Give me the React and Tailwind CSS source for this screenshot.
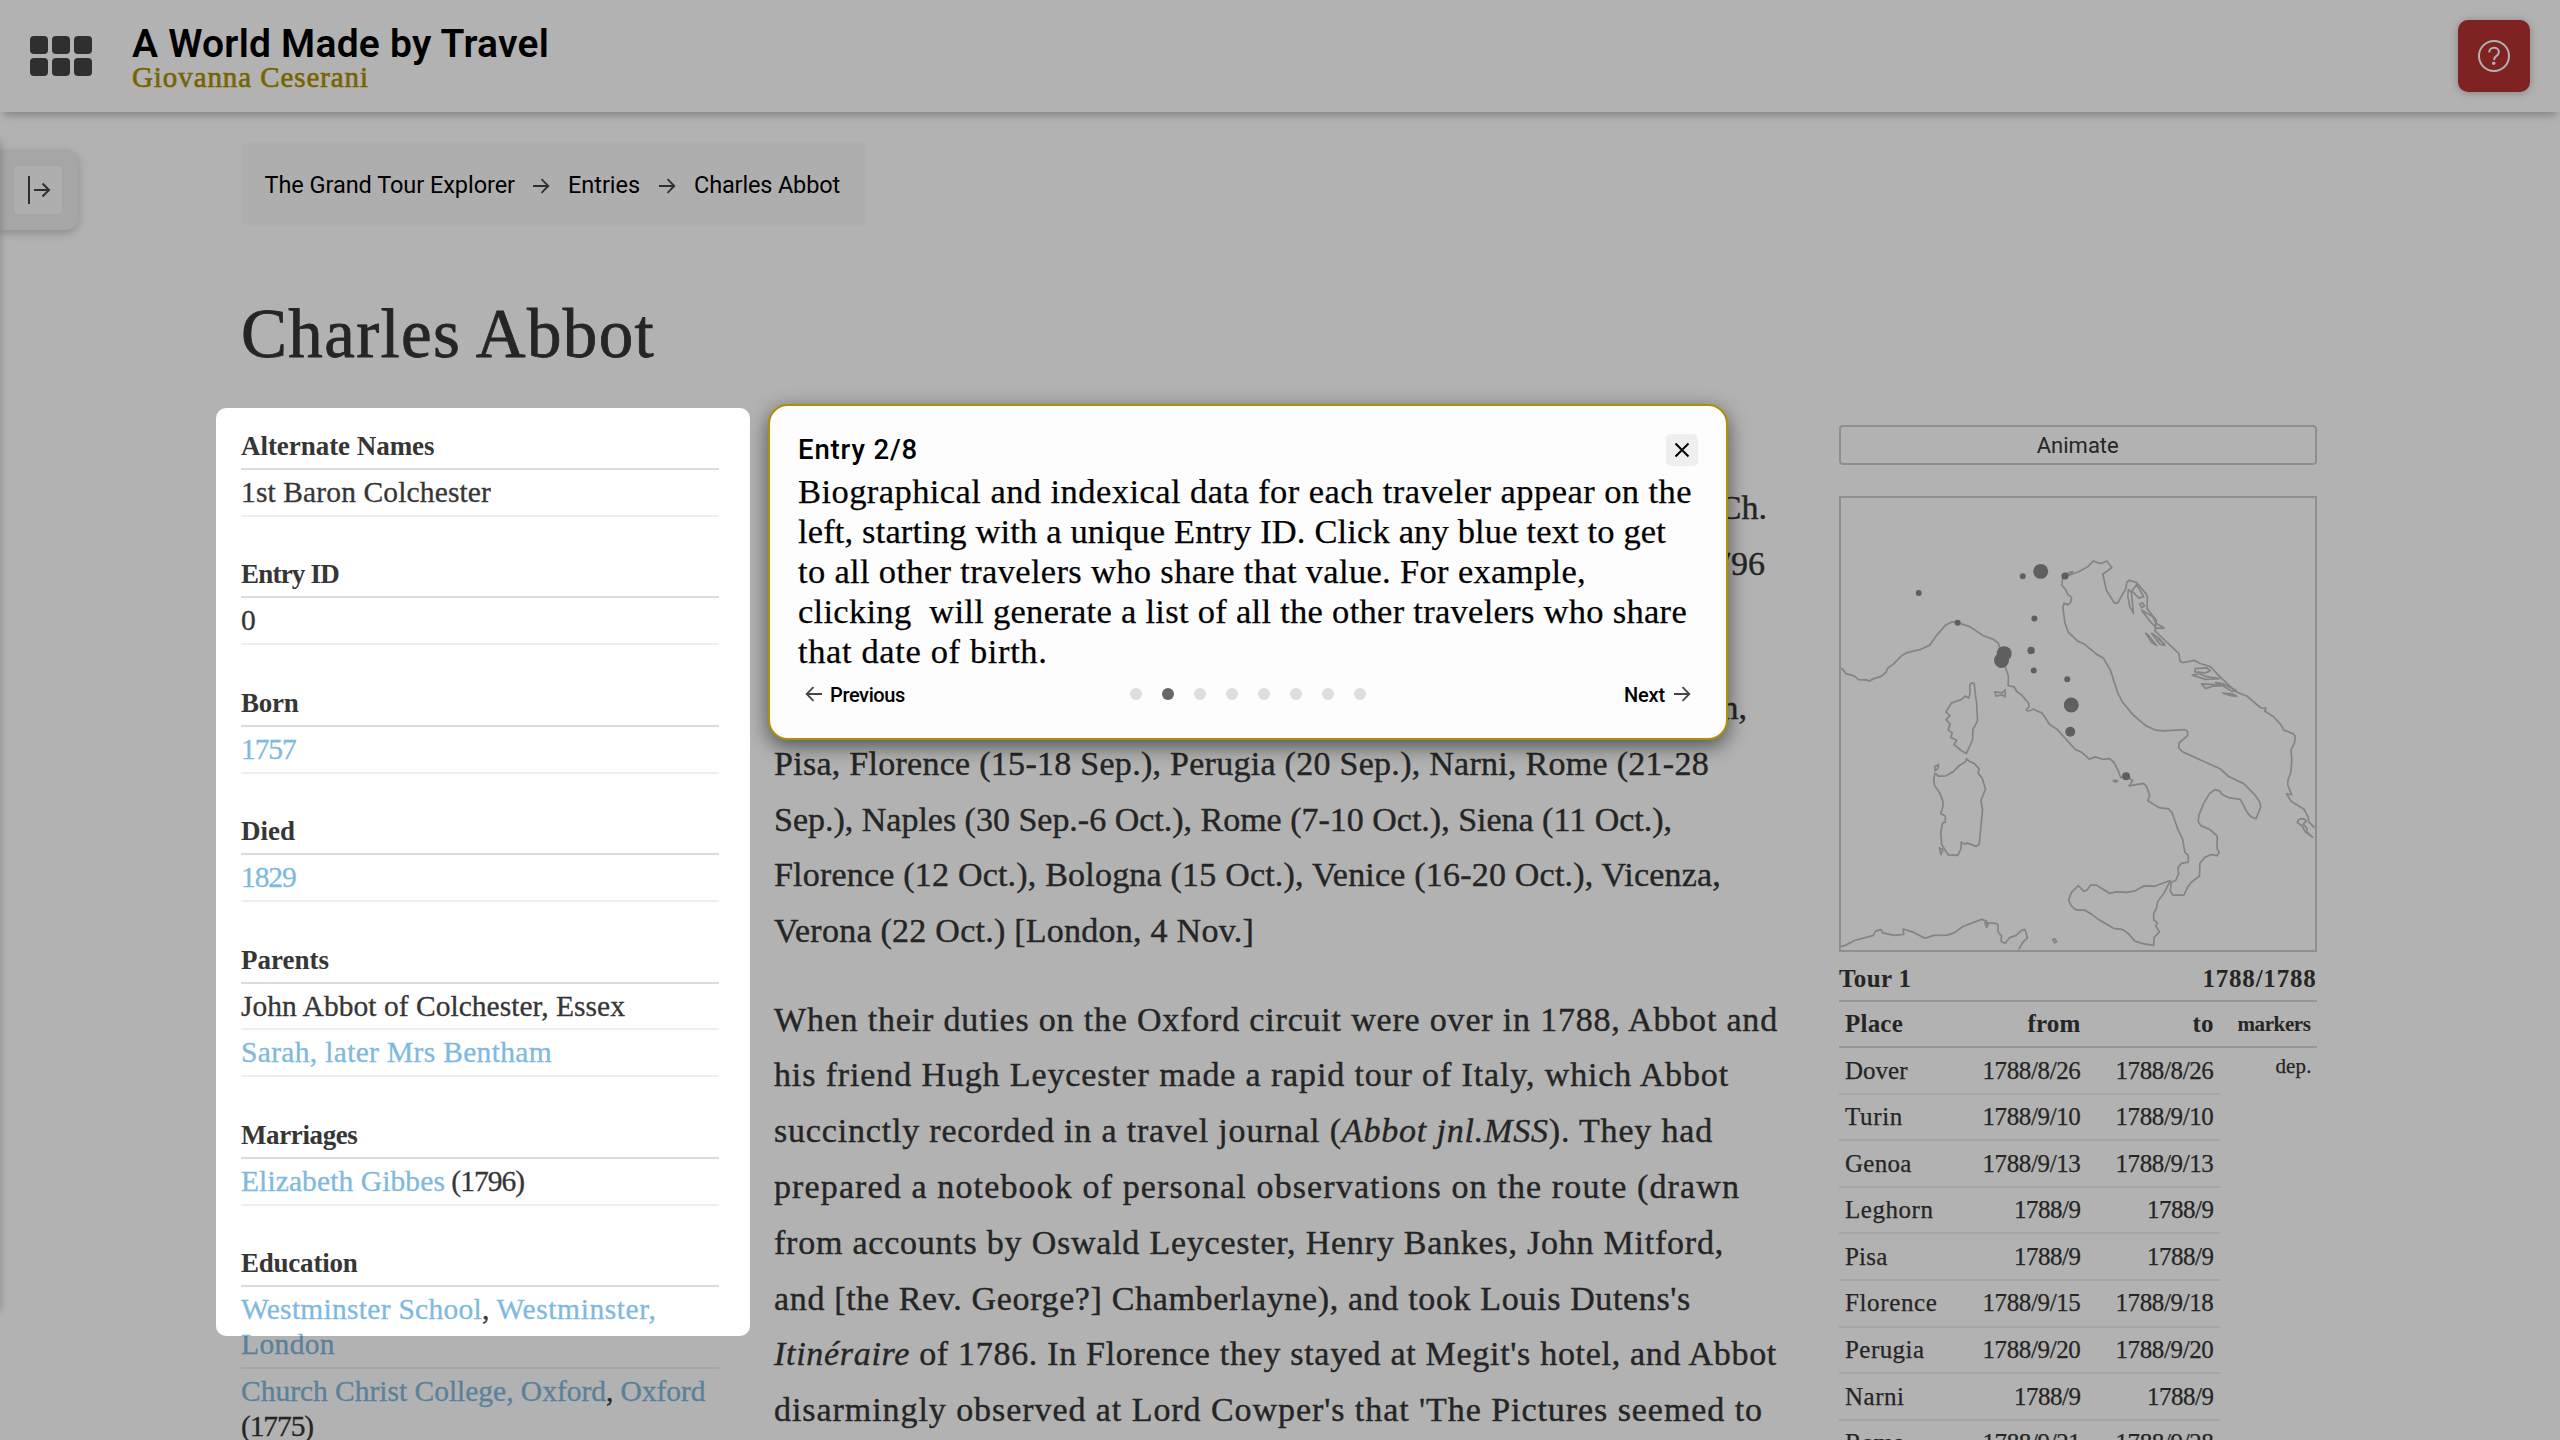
import React, { useLayoutEffect, useRef, useState } from "react";

/* Text run whose letter spacing is adjusted so that it fills a given measure. */
function Run({ w, className = "", children }) {
  const ref = useRef(null);
  const [spacing, setSpacing] = useState(null);
  useLayoutEffect(() => {
    if (!w || !ref.current) return;
    const el = ref.current;
    const n = el.textContent.length;
    setSpacing((w - el.getBoundingClientRect().width) / n);
  }, [w]);
  return (
    <span
      ref={ref}
      className={"inline-block whitespace-pre " + className}
      style={spacing === null ? undefined : { letterSpacing: spacing + "px" }}
    >
      {children}
    </span>
  );
}

function Arrow({ className = "", flip = false }) {
  return (
    <svg viewBox="0 0 18 18" fill="none" stroke="currentColor" strokeWidth="1.8" className={className}>
      {flip ? <path d="M17 9H2M8.5 2.2L1.7 9l6.8 6.800" /> : <path d="M1 9h15M9.500 2.200L16.300 9l-6.800 6.800" />}
    </svg>
  );
}

function Header() {
  return (
    <header className="relative z-10 flex h-[112px] w-full shrink-0 items-start bg-white shadow-[0_7px_8px_-4px_rgba(0,0,0,0.28)]">
      <div className="mt-9 ml-[30px] grid grid-cols-3 gap-1">
        {[0, 1, 2, 3, 4, 5].map((i) => (
          <span key={i} className="h-[18px] w-[18px] rounded-[4px] bg-[#444]" />
        ))}
      </div>
      <div className="ml-[40px] flex flex-col items-start pt-[25px]">
        <div className="h-[38px] font-['Roboto',sans-serif] text-[39px] leading-[38px] font-semibold text-black">
          <Run w={417}>A World Made by Travel</Run>
        </div>
        <div className="h-[26px] pt-px font-['Liberation_Serif',serif] text-[29px] leading-[26px] text-[#ad8f00] [-webkit-text-stroke:0.6px_#ad8f00]">
          <Run w={237}>Giovanna Ceserani</Run>
        </div>
      </div>
      <button className="mt-5 mr-[30px] ml-auto flex h-[72px] w-[72px] items-center justify-center rounded-[10px] bg-[#b53131] shadow-[0_1px_8px_rgba(0,0,0,0.25)]">
        <svg viewBox="0 0 32 32" className="h-8 w-8" fill="none" stroke="#fff">
          <circle cx="16" cy="16" r="15" strokeWidth="2" />
          <path d="M11.2 12.4c0-2.700 2-4.600 4.800-4.600s4.900 1.700 4.900 4.200c0 2-1.100 3-2.700 4.100-1.600 1-2 1.700-2 3.300v.5" strokeWidth="2" />
          <circle cx="15.700" cy="23.200" r="1.700" fill="#fff" stroke="none" />
        </svg>
      </button>
    </header>
  );
}

function DrawerTab() {
  return (
    <div className="flex w-[241px] shrink-0 pt-[38px]">
      <div className="flex h-20 w-[78px] items-center rounded-r-[12px] bg-[#eee] pl-[14px] shadow-[0_3px_10px_rgba(0,0,0,0.22)]">
        <button className="flex h-12 w-12 items-center justify-center rounded-[4px] bg-[#fafafa]">
          <svg viewBox="0 0 48 48" className="h-12 w-12" fill="none" stroke="#444" strokeWidth="2">
            <path d="M15 10v28M20 24h15M28.500 17.500L35 24l-6.500 6.500" />
          </svg>
        </button>
      </div>
    </div>
  );
}

function Breadcrumb() {
  return (
    <nav className="flex h-[84px] w-[625px] items-center rounded-[8px] bg-[#fafafa] pt-[3px] pl-[23.5px] font-['Roboto',sans-serif] text-[23.5px] leading-[81px] text-black">
      <Run w={250.500}>The Grand Tour Explorer</Run>
      <Arrow className="ml-[17px] h-[18px] w-[18px] text-[#444]" />
      <Run w={72} className="ml-[18px]">Entries</Run>
      <Arrow className="ml-[18px] h-[18px] w-[18px] text-[#444]" />
      <Run w={146} className="ml-[18px]">Charles Abbot</Run>
    </nav>
  );
}

const FACTS = [
  { label: ["Alternate Names", 193.500], rows: [[[["1st Baron Colchester", 250]]]] },
  { label: ["Entry ID", 98], rows: [[[["0", 14]]]] },
  { label: ["Born", 57.500], rows: [[[["1757", 54.500, 1]]]] },
  { label: ["Died", 54], rows: [[[["1829", 54.500, 1]]]] },
  {
    label: ["Parents", 88],
    rows: [[[["John Abbot of Colchester, Essex", 384]]], [[["Sarah, later Mrs Bentham", 311, 1]]]],
  },
  { label: ["Marriages", 116.500], rows: [[[["Elizabeth Gibbes", 204, 1], [" (1796)", 79]]]] },
  {
    label: ["Education", 116.500],
    rows: [
      [
        [["Westminster School", 241, 1], [", ", 14.500], ["Westminster,", 160, 1]],
        [["London", 94, 1]],
      ],
      [
        [["Church Christ College, Oxford", 365, 1], [", ", 14.500], ["Oxford", 85, 1]],
        [["(1775)", 72]],
      ],
    ],
  },
];

function Facts() {
  return (
    <aside className="flex w-[478px] shrink-0 flex-col gap-[35.6px] font-['Liberation_Serif',serif] leading-[35px] text-[#363636]">
      {FACTS.map((f) => (
        <section key={f.label[0]}>
          <h2 className="h-[46px] border-b-2 border-[#dbdbdb] pt-[5px] text-[27px] font-bold">
            <Run w={f.label[1]}>{f.label[0]}</Run>
          </h2>
          {f.rows.map((row, i) => (
            <div key={i} className="border-b-2 border-[#eee] pt-[5px] pb-[4.8px] text-[29.500px] [-webkit-text-stroke:0.3px_currentColor]">
              {row.map((line, j) => (
                <div key={j} className="flex h-[35px]">
                  {line.map(([t, w, link], k) => (
                    <Run key={k} w={w} className={link ? "text-[#80b9e0]" : "text-[#363636]"}>
                      {t}
                    </Run>
                  ))}
                </div>
              ))}
            </div>
          ))}
        </section>
      ))}
    </aside>
  );
}

const ITINERARY = [
  ["Pisa, Florence (15-18 Sep.), Perugia (20 Sep.), Narni, Rome (21-28", 935],
  ["Sep.), Naples (30 Sep.-6 Oct.), Rome (7-10 Oct.), Siena (11 Oct.),", 898],
  ["Florence (12 Oct.), Bologna (15 Oct.), Venice (16-20 Oct.), Vicenza,", 947],
  ["Verona (22 Oct.) [London, 4 Nov.]", 480],
];

const NARRATIVE = [
  ["When their duties on the Oxford circuit were over in 1788, Abbot and", 1004],
  ["his friend Hugh Leycester made a rapid tour of Italy, which Abbot", 955],
  [<>succinctly recorded in a travel journal (<i>Abbot jnl.MSS</i>). They had</>, 939],
  ["prepared a notebook of personal observations on the route (drawn", 966],
  ["from accounts by Oswald Leycester, Henry Bankes, John Mitford,", 950],
  ["and [the Rev. George?] Chamberlayne), and took Louis Dutens's", 917],
  [<><i>Itinéraire</i> of 1786. In Florence they stayed at Megit's hotel, and Abbot</>, 1003],
  ["disarmingly observed at Lord Cowper's that 'The Pictures seemed to", 989],
];

function Article() {
  return (
    <article className="ml-[55px] flex w-[1005px] shrink-0 flex-col gap-[32.6px] pt-[56px] font-['Liberation_Serif',serif] text-[34px] leading-[55.8px] text-[#363636] [-webkit-text-stroke:0.4px_#363636]">
      <p>
        <span className="block h-[55.8px] pr-[12px] text-right">Ch.</span>
        <span className="block h-[55.8px] pr-[14px] text-right">796</span>
      </p>
      <div>
        <p className="h-[55.8px]" />
        <p className="h-[55.8px] pr-[32px] text-right">n,</p>
        {ITINERARY.map(([t, w], i) => (
          <p key={i} className="h-[55.8px]"><Run w={w}>{t}</Run></p>
        ))}
      </div>
      <div>
        {NARRATIVE.map(([t, w], i) => (
          <p key={i} className="h-[55.8px]"><Run w={w}>{t}</Run></p>
        ))}
      </div>
    </article>
  );
}

const COAST = [
  /* France, Liguria and the Tyrrhenian coast */
  "M58 722L68 728L78 740L104 747L116 757L140 758L148 761L162 754L185 747L198 737L204 724L220 714L245 690L262 681L300 673L330 660L352 631L378 604L396 595L414 597L430 602L452 609L490 633L520 643L536 654L541 668L548 690L558 722L567 748L566 774L584 777L592 790L608 801L628 824L629 833L620 842L628 845L642 840L668 851L680 867L690 882L714 897L768 953L788 961L810 980L828 974L852 981L871 979L884 989L897 1012L905 1032L921 1027L941 1041L930 1055L974 1048L983 1058L992 1082L986 1097L1020 1116L1049 1120L1060 1132L1078 1180L1091 1204L1098 1242L1108 1250L1108 1269L1088 1273L1077 1285L1079 1302L1070 1321L1057 1326L1054 1350L1061 1362L1095 1362L1106 1340L1117 1326L1142 1308L1143 1273L1158 1256L1177 1248L1195 1251L1201 1242L1195 1232L1195 1196L1172 1177L1146 1167L1138 1155L1140 1138L1154 1105L1172 1077L1188 1066L1204 1070L1208 1078L1229 1088L1265 1093L1286 1131L1297 1142L1312 1147L1326 1115L1323 1100L1308 1080L1275 1049L1230 1029L1204 1007L1160 989L1090 959L1079 948L1081 934L1106 914L1106 902L1096 897L1035 901L1010 899L980 886L940 854L911 821L897 797L874 731L853 697L833 686L795 657L775 649L747 624L737 598L731 556L734 542L746 547L754 540L757 526L745 517L739 504L728 492L730 470L752 462L778 454L806 440L822 424L845 431L863 424L878 442L851 461L862 507L887 543L896 541L920 502L923 484L931 478L951 484L980 514L985 525L984 557L1012 591L1008 620L1080 684L1083 705L1092 709L1126 703L1142 711L1176 721L1198 744L1250 790L1284 803L1326 836L1342 837L1338 845L1366 862L1387 884L1395 898L1424 909L1430 916L1428 934L1417 955L1420 982L1417 1015L1408 1040L1407 1052L1419 1080L1404 1078L1419 1100L1456 1120L1469 1143L1471 1156L1488 1173",
  /* Corsica and Sardinia */
  "M456 766L464 768L468 804L471 821L474 872L460 897L459 926L451 943L440 964L428 958L403 940L411 927L393 919L398 907L385 898L392 882L379 869L391 858L379 848L395 823L427 812L436 803L448 808L451 798L451 772Z",
  "M441 979L448 986L464 992L479 1008L475 1018L488 1034L498 1065L484 1096L489 1122L479 1219L470 1225L444 1216L435 1219L425 1213L424 1232L414 1250L386 1249L366 1220L363 1185L369 1159L377 1157L377 1140L363 1133L370 1112L369 1096L360 1075L344 1053L342 1036L346 1020L357 1028L379 1027L400 1016L419 998L436 989Z",
  "M357 995L354 1007L346 1012L346 1001ZM359 1229L370 1234L364 1248ZM526 791L548 794L557 786L557 805L548 800L529 803Z",
  /* Sicily */
  "M1054 1322L1034 1358L1016 1380L1012 1400L1004 1413L1004 1431L1015 1440L1010 1448L1021 1465L1005 1481L1004 1503L972 1498L947 1491L930 1472L912 1459L884 1455L837 1430L818 1416L796 1404L770 1403L756 1392L748 1376L756 1355L777 1335L794 1351L804 1347L814 1334L832 1334L872 1357L892 1353L924 1354L950 1349L975 1336L1007 1337L1047 1323Z",
  /* Tunisia */
  "M58 1507L76 1503L102 1490L160 1475L168 1462L184 1459L188 1468L224 1475L252 1472L250 1457L278 1465L316 1483L342 1475L382 1474L405 1467L430 1450L486 1430L500 1434L504 1440L530 1441L536 1447L535 1464L546 1477L545 1492L557 1497L571 1481L590 1475L606 1461L617 1459L624 1482L610 1495L598 1514",
  "M496 1439L506 1442L501 1453ZM700 1487L707 1485L712 1493L706 1496ZM882 1041L888 1039L895 1042L888 1044Z",
  /* Dalmatian islands */
  "M928 504L937 512L943 571L932 552L926 522ZM938 508L953 490L974 524L960 528ZM962 545L970 541L977 550L968 555ZM968 562L1002 580L1010 598L1036 612L1013 613L990 590ZM980 627L989 633L1013 661L1000 654ZM998 627L1020 640L1038 661L1022 657ZM1016 642L1038 658",
  "M1129 726L1164 724L1174 732L1160 738L1128 735ZM1120 744L1142 740L1160 748L1202 754L1160 756ZM1148 769L1204 772L1190 765L1212 768L1252 787L1240 790L1212 774L1182 775L1160 782ZM1212 795L1240 797L1254 804L1236 802Z",
  "M1482 1199L1460 1184L1451 1168L1436 1158L1441 1149L1456 1147L1464 1154L1454 1162L1466 1176L1464 1184ZM741 459L760 454L752 464Z",
];

const STOPS = [
  [297, 514, 3], [414, 597, 3], [610, 467, 3], [664, 453, 7.500], [737, 466, 3.600], [645, 585, 3], [554, 684, 7.500],
  [546, 703, 7.500], [635, 675, 3.700], [643, 731, 3], [744, 756, 3], [756, 828, 7.500], [753, 903, 5], [921, 1028, 4],
];

function TourMap() {
  return (
    <div className="mt-[31px] h-[456px] w-full overflow-hidden border-2 border-[#cdcdcd]">
      <svg viewBox="63 247 1425 1269" preserveAspectRatio="none" className="h-full w-full" fill="none">
        {COAST.map((d, i) => (
          <path key={i} d={d} stroke="#bdbdbd" strokeWidth="5" strokeLinejoin="round" />
        ))}
        {STOPS.map(([x, y, r], i) => (
          <ellipse key={i} cx={x} cy={y} rx={r * 3} ry={r * 2.8} fill="#888" />
        ))}
      </svg>
    </div>
  );
}

const TRIP = [
  ["Dover", 62.500, "1788/8/26", "1788/8/26", "dep."],
  ["Turin", 58, "1788/9/10", "1788/9/10"],
  ["Genoa", 66.500, "1788/9/13", "1788/9/13"],
  ["Leghorn", 88.500, "1788/9", "1788/9"],
  ["Pisa", 42.500, "1788/9", "1788/9"],
  ["Florence", 92.500, "1788/9/15", "1788/9/18"],
  ["Perugia", 79.500, "1788/9/20", "1788/9/20"],
  ["Narni", 59.500, "1788/9", "1788/9"],
  ["Rome", 59, "1788/9/21", "1788/9/28"],
];

function dateWidth(d) {
  return d.length > 6 ? 98 : 66.500;
}

function Tour() {
  return (
    <aside className="ml-[60px] w-[477.5px] shrink-0 pt-px font-['Liberation_Serif',serif] text-[25px] text-[#363636]">
      <button className="flex h-10 w-full items-center justify-center rounded-[4px] border-2 border-[#cdcdcd] pt-px font-['Roboto',sans-serif] text-[22px] text-[#363636]">
        <Run w={82}>Animate</Run>
      </button>
      <TourMap />
      <div className="flex h-[50px] justify-between border-b-2 border-[#d9d9d9] pt-[9px] leading-[36px] font-bold">
        <Run w={72.500}>Tour 1</Run>
        <Run w={114}>1788/1788</Run>
      </div>
      <div className="flex h-[46px] border-b-2 border-[#d9d9d9] px-[6px] pt-[1.5px] leading-[40px] font-bold">
        <span className="w-[107px]"><Run w={58}>Place</Run></span>
        <span className="w-[128.500px] text-right"><Run w={53}>from</Run></span>
        <span className="w-[133px] text-right"><Run w={21}>to</Run></span>
        <span className="flex-1 text-right text-[21px]"><Run w={73}>markers</Run></span>
      </div>
      {TRIP.map(([place, w, from, to, mark]) => (
        <div key={place} className="flex h-[46.6px] leading-[42px] [-webkit-text-stroke:0.25px_#363636]">
          <div className="flex w-[380.5px] border-b-2 border-[#ececec] px-[6px] pt-[1.5px]">
            <span className="w-[107px]"><Run w={w}>{place}</Run></span>
            <span className="w-[128.5px] text-right"><Run w={dateWidth(from)}>{from}</Run></span>
            <span className="w-[133px] text-right"><Run w={dateWidth(to)}>{to}</Run></span>
          </div>
          {mark && <span className="flex-1 pt-px pr-[5px] text-right text-[21px] leading-[35px]"><Run w={36}>{mark}</Run></span>}
        </div>
      ))}
    </aside>
  );
}

const STEP_TEXT = [
  ["Biographical and indexical data for each traveler appear on the", 894],
  ["left, starting with a unique Entry ID. Click any blue text to get", 868],
  ["to all other travelers who share that value. For example,", 788],
  ["clicking  will generate a list of all the other travelers who share", 889],
  ["that date of birth.", 249.500],
];

function StepCard() {
  return (
    <div className="absolute top-[404px] left-[768px] z-30 h-[336px] w-[960px] rounded-[20px] border-2 border-[#ae8f06] bg-[#fdfdfd] px-7 pt-7 shadow-[0_6px_20px_rgba(0,0,0,0.55)]">
      <div className="flex h-8 items-center justify-between">
        <div className="font-['Roboto',sans-serif] text-[27.500px] leading-[30px] font-medium text-black">
          <Run w={120}>Entry 2/8</Run>
        </div>
        <button className="flex h-8 w-8 items-center justify-center rounded-[5px] bg-[#efefef]">
          <svg viewBox="0 0 16 16" className="h-4 w-4" fill="none" stroke="#000" strokeWidth="2">
            <path d="M1.500 1.500l13 13M14.500 1.500l-13 13" />
          </svg>
        </button>
      </div>
      <div className="mt-[5px] font-['Liberation_Serif',serif] text-[34.500px] leading-[40px] text-black [-webkit-text-stroke:0.25px_#000]">
        {STEP_TEXT.map(([t, w], i) => (
          <p key={i} className="h-10"><Run w={w}>{t}</Run></p>
        ))}
      </div>
      <div className="mt-[7px] flex h-8 items-center justify-between px-[7px] font-['Roboto',sans-serif] text-[20px] leading-[32px] font-medium text-black">
        <span className="flex w-[120px] items-center">
          <Arrow flip className="mr-[7px] h-[18px] w-[18px] text-[#444]" />
          <Run w={75} className="pt-px">Previous</Run>
        </span>
        <span className="flex gap-5">
          {[0, 1, 2, 3, 4, 5, 6, 7].map((i) => (
            <span key={i} className={"h-3 w-3 rounded-full " + (i === 1 ? "bg-[#666]" : "bg-[#ddd]")} />
          ))}
        </span>
        <span className="flex w-[120px] items-center justify-end">
          <Run w={41} className="pt-px">Next</Run>
          <Arrow className="ml-[8px] h-[18px] w-[18px] text-[#444]" />
        </span>
      </div>
    </div>
  );
}

export default function App() {
  return (
    <div className="relative flex h-[1440px] w-[2560px] flex-col overflow-hidden bg-white">
      <Header />
      <div className="flex min-h-0 flex-1">
        <DrawerTab />
        <main className="flex flex-col pt-[30px]">
          <Breadcrumb />
          <h1 className="mt-[64px] h-[86px] font-['Liberation_Serif',serif] text-[69px] leading-[88px] text-[#363636] [-webkit-text-stroke:0.8px_#363636]">
            <Run w={414}>Charles Abbot</Run>
          </h1>
          <div className="mt-[48px] flex items-start">
            <Facts />
            <Article />
            <Tour />
          </div>
        </main>
      </div>
      {/* Off-screen drawer edge */}
      <div className="absolute top-[140px] -left-[20px] z-10 h-[1170px] w-5 shadow-[0_0_8px_rgba(0,0,0,0.25)]" />
      {/* Spotlight around the highlighted column */}
      <div className="absolute top-[408px] left-[216px] z-20 h-[928px] w-[534px] rounded-[10px] shadow-[0_0_0_3000px_rgba(0,0,0,0.3)]" />
      <StepCard />
    </div>
  );
}
